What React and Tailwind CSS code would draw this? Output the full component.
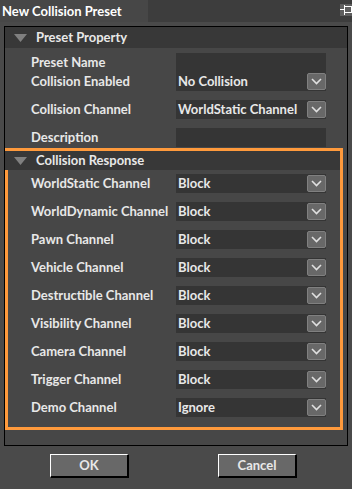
import React from 'react';

const font = { fontFamily: 'Lato, "Open Sans", sans-serif' };

function Triangle() {
  return (
    <svg width="13" height="8" viewBox="0 0 13 8" className="ml-[9px] mr-[9px]">
      <polygon points="0,0 13,0 6.5,8" fill="#808080" />
    </svg>
  );
}

function Header({ title, className = '' }) {
  return (
    <div className={`flex items-center bg-[#383838] text-[#e8e8e8] font-bold text-[13px] ${className}`}>
      <Triangle />
      <span>{title}</span>
    </div>
  );
}

function Chevron() {
  return (
    <div className="w-[19px] h-[17px] rounded-[2px] bg-[#686868] border border-[#808080] flex items-center justify-center">
      <svg width="11" height="7" viewBox="0 0 11 7">
        <polyline points="1,1 5.5,5.5 10,1" fill="none" stroke="#e0e0e0" strokeWidth="1.6" />
      </svg>
    </div>
  );
}

function Field({ value, select }) {
  return (
    <div className="w-[150px] h-[19px] bg-[#353535] flex items-center justify-between pl-[2px] text-[#e8e8e8] font-bold text-[13px]">
      <span>{value}</span>
      {select && <Chevron />}
    </div>
  );
}

function Row({ label, value, select, className = '' }) {
  return (
    <div className={`flex items-center h-[19px] ${className}`}>
      <span className="w-[171px] pl-[26px] text-[#e8e8e8] font-bold text-[13px] whitespace-nowrap">{label}</span>
      <Field value={value} select={select} />
    </div>
  );
}

const channels = [
  ['WorldStatic Channel', 'Block'],
  ['WorldDynamic Channel', 'Block'],
  ['Pawn Channel', 'Block'],
  ['Vehicle Channel', 'Block'],
  ['Destructible Channel', 'Block'],
  ['Visibility Channel', 'Block'],
  ['Camera Channel', 'Block'],
  ['Trigger Channel', 'Block'],
  ['Demo Channel', 'Ignore'],
];

export default function App() {
  return (
    <div style={font} className="w-[352px] h-[489px] bg-[#4a4a4a] overflow-hidden flex flex-col leading-none">
      {/* Title bar */}
      <div className="flex h-[22px]">
        <div className="w-[148px] bg-[#474747] text-white font-bold text-[13px] pl-[2px] flex items-center">
          New Collision Preset
        </div>
        <div className="flex-1 bg-[#3d3d3d] flex justify-end items-start pt-[4px]">
          <div className="w-[12px] h-[12px] bg-[#5e5e5e]">
            <svg width="12" height="12" viewBox="0 0 12 12">
              <rect x="4.5" y="2.5" width="7" height="6" fill="none" stroke="#fff" strokeWidth="1" />
              <line x1="0" y1="5.5" x2="4.5" y2="5.5" stroke="#fff" strokeWidth="1" />
              <line x1="4.5" y1="1" x2="4.5" y2="11" stroke="#fff" strokeWidth="1" />
            </svg>
          </div>
        </div>
      </div>

      {/* Panel */}
      <div className="mt-[4px] ml-[4px] mr-[4px] h-[420px] border border-black bg-[#474747]">
        <Header title="Preset Property" className="h-[21px]" />
        <Row label="Preset Name" value="" className="mt-[5px]" />
        <Row label="Collision Enabled" value="No Collision" select />
        <Row label="Collision Channel" value="WorldStatic Channel" select className="mt-[9px]" />
        <Row label="Description" value="" className="mt-[9px]" />

        <div className="mt-px mr-[4px] border-[3px] border-[#ff9a3c] pb-[10px]">
          <Header title="Collision Response" className="h-[19px] -ml-[3px]" />
          <div className="flex flex-col gap-[9px] mt-[4px] -ml-[3px]">
            {channels.map(([label, value]) => (
              <Row key={label} label={label} value={value} select />
            ))}
          </div>
        </div>
      </div>

      {/* Buttons */}
      <div className="flex mt-[8px]">
        <button className="ml-[50px] w-[79px] h-[24px] bg-[#686868] border-t border-l border-white border-b-2 border-r-2 border-b-black border-r-black text-[#e8e8e8] font-bold text-[13px] flex items-center justify-center">
          OK
        </button>
        <button className="ml-[89px] w-[79px] h-[24px] bg-[#686868] border-t border-l border-white border-b-2 border-r-2 border-b-black border-r-black text-[#e8e8e8] font-bold text-[13px] flex items-center justify-center">
          Cancel
        </button>
      </div>
    </div>
  );
}
